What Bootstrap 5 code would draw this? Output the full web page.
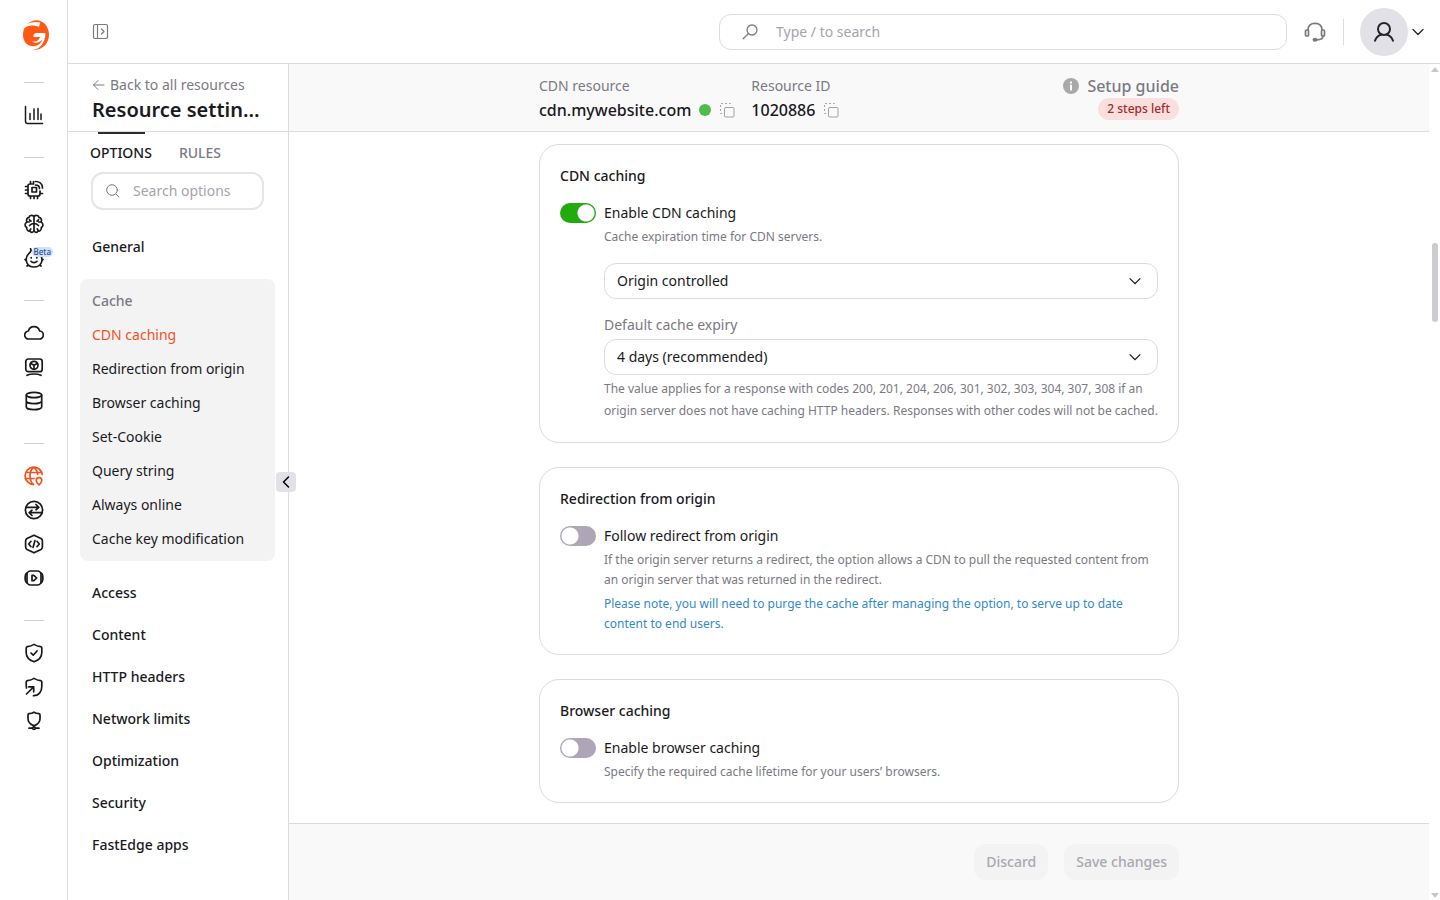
<!DOCTYPE html>
<html lang="en">
<head>
<meta charset="utf-8">
<meta name="viewport" content="width=device-width, initial-scale=1">
<title>Resource settings</title>
<link href="https://cdn.jsdelivr.net/npm/bootstrap@5.3.0/dist/css/bootstrap.min.css" rel="stylesheet">
<style>
  :root { --line: #dcdcdf; --ink: #1a1a1d; --muted: #7b7984; --brand: #f4511e; }
  body { font-family: "Noto Sans", sans-serif; font-size: 14px; line-height: 20px; color: var(--ink); background: #fff; }
  a { color: inherit; text-decoration: none; }
  svg { display: block; fill: none; stroke: currentColor; stroke-linecap: round; stroke-linejoin: round; flex: none; }
  .btn { --bs-btn-font-size: 14px; --bs-btn-line-height: 20px; }

  /* icon rail */
  .rail { width: 68px; border-right: 1px solid var(--line); padding-top: 18px; }
  .rail hr { width: 20px; height: 1px; margin: 25px 0 15px; border: 0; background: #cfcfd3; opacity: 1; }
  .rail-logo { height: 39px; padding-left: 4px; }
  .rail-link { width: 34px; height: 34px; display: grid; place-items: center; }
  .rail-link svg { width: 20px; height: 20px; stroke-width: 1.7; }
  .rail-link.active { color: var(--brand); }
  .beta { left: 15px; top: 6px; background: #cfe0fb; color: #2b5087; font-size: 8px; line-height: 10px; font-weight: 500; border-radius: 5px; padding: 0 2px; }

  /* top bar */
  .topbar { height: 64px; border-bottom: 1px solid var(--line); padding: 0 16px 0 24px; }
  .global-search { width: 568px; height: 36px; border: 1px solid var(--line); border-radius: 12px; padding: 0 22px; gap: 18px; }
  .bare-input { border: 0; outline: 0; background: none; padding: 0; min-width: 0; color: inherit; }
  .bare-input::placeholder { color: #a6a3af; opacity: 1; }
  .avatar { width: 48px; height: 48px; background: #e3e1e8; place-items: center; }
  .tall-rule { width: 1px; height: 26px; background: var(--line); }

  /* settings panel */
  .panel { width: 221px; border-right: 1px solid var(--line); }
  .panel-head { height: 68px; border-bottom: 1px solid var(--line); padding: 11px 24px 0; }
  .panel-head h1 { font-size: 20px; line-height: 28px; font-weight: 600; margin: 1px 0 0; }
  .text-soft { color: var(--muted); }
  .tabs { padding: 11px 22px 0; gap: 27px; }
  .tabs .active::before { content: ""; position: absolute; left: 8px; right: 7px; top: -11px; height: 2px; background: #2c2c2f; }
  .option-search { height: 38px; margin: 9px 24px 0 23px; border: 2px solid #e4e4e9; border-radius: 12px; padding: 0 13px; gap: 13px; }
  .group-link { display: block; padding: 11px 24px; font-weight: 500; }
  .group-open { margin: 11px 13px 11px 12px; padding: 5px 12px; border-radius: 8px; background: #f3f3f3; }
  .group-open > * { display: block; padding: 7px 0; margin: 0; }
  .group-open h2 { font-size: 14px; line-height: 20px; font-weight: 500; color: var(--muted); }
  .group-open .active { color: var(--brand); }
  .collapse-btn { right: -8px; top: 408px; width: 20px; height: 20px; background: #e3e1e8; border: 0; border-radius: 4px; padding: 0; display: grid; place-items: center; z-index: 2; }

  /* main column */
  .column { width: 100%; max-width: 640px; margin: 0 auto; }
  .resource-bar { height: 68px; background: #f9f9f9; border-bottom: 1px solid var(--line); padding-top: 12px; }
  .resource-bar .value { font-size: 16px; line-height: 24px; font-weight: 500; margin-top: 2px; gap: 8px; }
  .status-dot { width: 12px; height: 12px; background: #52bb4e; }
  .steps { background: #fadfdf; color: #a32b2b; font-size: 12px; line-height: 16px; font-weight: 500; padding: 3px 9px; margin-top: 2px; }
  .icon-btn { border: 0; background: none; padding: 0; }
  .copy { color: #a3a2aa; }
  .option-card { border: 1px solid var(--line); border-radius: 20px; padding: 20px; }
  .option-card h2 { font-size: 14px; line-height: 22px; font-weight: 500; margin: 0 0 14px; }
  .form-switch.toggle { min-height: 24px; margin: 0 0 2px; padding: 0; gap: 8px; }
  .form-switch.toggle .form-check-input { width: 36px; height: 20px; margin: 0; border: 0; background-color: #aea6b6; background-image: radial-gradient(circle at center, #fff 8px, transparent 9px); background-size: 20px 20px; flex: none; }
  .form-switch.toggle .form-check-input:checked { background-color: #21ab0e; }
  .details { padding-left: 44px; }
  .hint { font-size: 12px; line-height: 20px; color: var(--muted); margin: 0; }
  .hint.loose { line-height: 22px; margin-top: 3px; }
  .hint.note { color: #3589c9; }
  .form-select { height: 36px; font-size: 14px; line-height: 20px; padding: 7px 36px 7px 12px; border-color: var(--line); border-radius: 12px; color: var(--ink);
    background-image: url("data:image/svg+xml,%3csvg xmlns='http://www.w3.org/2000/svg' viewBox='0 0 12 12'%3e%3cpath fill='none' stroke='%231a1a1d' stroke-width='1.3' d='M.7 3.4 6 8.6l5.300-5.200'/%3e%3c/svg%3e"); background-size: 12px 12px; background-position: right 16px center; }
  .action-bar { height: 77px; background: #f9f9f9; border-top: 1px solid var(--line); padding-top: 20px; }
  .action-bar .btn { height: 36px; padding: 0 12px; border: 0; border-radius: 12px; background: #f3f3f4; color: #aaa7b1; opacity: 1; font-weight: 500; }
  .scroll-track { width: 11px; padding: 3px 0 2px; color: #c8c8cb; }
  .scroll-track svg { fill: currentColor; stroke: none; }
  .scroll-thumb { width: 6px; height: 79px; left: 3px; top: 179px; background: #cdccd1; border-radius: 3px; }
</style>
</head>
<body>
<div class="d-flex vh-100 overflow-hidden">

  <nav class="rail d-flex flex-column align-items-center flex-shrink-0" aria-label="Products">
    <a class="rail-logo" href="#" aria-label="Home">
      <svg width="28" height="34" viewBox="0 0 28 34">
        <path fill="#ff5913" stroke="none" d="M5.500 6C8 3.500 11 2.200 14.500 2.200 21.500 2.200 27 8.700 27 16.800c0 8.700-6.500 15.500-16.300 15.400C17 31 22 26.500 23.200 18.500l.1-3.500H14.500c-2 0-3 1.500-3.200 4h6.700c-1 3-3.200 4.500-5.700 4.500-3 0-4.700-2-4.300-5.500C8.600 12.800 11.500 9.500 17 9l1.300-4.600C13 3.200 8.500 4.200 5.500 6Z"/>
        <path fill="#ff5913" stroke="none" d="M17 8.800C10 6.500 5.500 7.500 2.500 10 .5 14 .8 19 2 22c1.500 4 5 6.200 9 6.200 4.500 0 8-2.700 9.500-6.700-3 3.300-7 4-9.500 2.500-4-2.500-2.500-9 6-15.200Z"/>
      </svg>
    </a>
    <hr>
    <a class="rail-link" href="#" aria-label="Statistics"><svg viewBox="0 0 20 20"><path d="M1.500 1.500v14.700c0 1.400.7 2.300 2.300 2.300h14.700M6 8.500v6M10 4v10.500M14 3.500v11M17 9v5.500" stroke-width="1.500"/></svg></a>
    <hr>
    <a class="rail-link" href="#" aria-label="Edge compute"><svg viewBox="0 0 20 20"><path d="M9 4H6a2 2 0 0 0-2 2v8a2 2 0 0 0 2 2h8a2 2 0 0 0 2-2v-3M8 7.500h4.500V12H8zM6.500 4V1.500M9.500 4V1.500M6.500 16v2.500M10 16v2.500M13.500 16v2.500M4 6.500H1.500M4 10H1.500M4 13.500H1.500M16 13.500h2.500M11.500 5c2.500 0 4 1.500 4 3.500M11.500 1.500c4 0 7 2.500 7 6.500"/></svg></a>
    <a class="rail-link" href="#" aria-label="AI"><svg viewBox="0 0 20 20"><path d="M10 3C9.500.8 5.500.7 5 3.400 2.500 3.800 2 6.500 3 8 .5 9.200.5 12.200 2.700 13.500 2.300 16 4.500 17.500 6 17c1 2.200 4 1.500 4-1zm0 0c.5-2.200 4.500-2.300 5 .4 2.500.4 3 3.100 2 4.600 2.500 1.200 2.500 4.200.3 5.500.4 2.500-1.800 4-3.300 3.500-1 2.200-4 1.500-4-1M5.500 5.500c0 1 .5 1.500 1.500 1.700M14.500 5.500c0 1-.5 1.500-1.500 1.700M10 9.500c-2 0-3 .5-4.500 2M10 9.500c2 0 3 .5 4.500 2M3 8h2M17 8h-2M6 17c-.2-1 .1-1.700.8-2.100M14 17c.2-1-.1-1.700-.8-2.100"/></svg></a>
    <a class="rail-link position-relative" href="#" aria-label="AI assistant, beta"><svg viewBox="0 0 20 20"><path d="M6.500.8C8.200 3 6.500 4 4.500 6 1.500 9 2 12.500 3 15c1.200 2.700 3.600 4 7 4s6-1.500 7.200-4c1-2 1-4 .3-5.800M1 11.500l1 1M19 11.500l-1 1M4 17.300l-1 .7M16 17.300l1 .7M7.200 9.500v.5M12.800 9.500v.5M7 13.300c1.500 1.800 4.500 1.800 6 0"/></svg><span class="beta position-absolute">Beta</span></a>
    <hr>
    <a class="rail-link" href="#" aria-label="Cloud"><svg viewBox="0 0 20 20"><path d="M5 16a4 4 0 0 1-.6-8A5.800 5.800 0 0 1 15.600 8a4 4 0 0 1-.6 8z"/></svg></a>
    <a class="rail-link" href="#" aria-label="Hosting"><svg viewBox="0 0 20 20"><rect x="1.800" y="2" width="16.400" height="12.700" rx="2.500"/><circle cx="10" cy="8.300" r="4"/><path d="M10 8.300V12M10 8.300 6.800 6.500M10 8.300l3.200-1.800M3 18.300c2-.9 4-1.300 7-1.300s5 .4 7 1.300"/></svg></a>
    <a class="rail-link" href="#" aria-label="Storage"><svg viewBox="0 0 20 20"><ellipse cx="10" cy="4" rx="7.700" ry="2.700"/><path d="M2.300 4v12c0 1.500 3.400 2.700 7.700 2.700s7.700-1.200 7.700-2.700V4M2.300 10c0 1.500 3.400 2.700 7.700 2.700s7.700-1.200 7.700-2.700"/></svg></a>
    <hr>
    <a class="rail-link active" href="#" aria-label="CDN"><svg viewBox="0 0 20 20"><path d="M18.400 8.500A8.700 8.700 0 1 0 9.500 18.500M9.500 18.500C7 16.500 6 13 6 10s1-6.500 3.700-8.600C12.300 3.200 13.500 6 13.600 8.500M2 6.500h15.500M1.200 12.500H10"/><path d="M15 19c-1.700-1.600-2.800-2.900-2.800-4.500a2.800 2.800 0 0 1 5.600 0c0 1.600-1.100 2.900-2.800 4.500Z"/></svg></a>
    <a class="rail-link" href="#" aria-label="Load balancing"><svg viewBox="0 0 20 20"><circle cx="10" cy="10" r="8.600"/><path d="M2 7.300h12.500M12 4.500l2.800 2.800-2.800 2.500M18 12.700H5.500M8 10.200l-2.800 2.500L8 15.500"/></svg></a>
    <a class="rail-link" href="#" aria-label="FastEdge"><svg viewBox="0 0 20 20"><path d="M10 1.200 17 4.600q1.400.8 1.400 2.300v6.200q0 1.500-1.400 2.300L10 18.800 3 15.400q-1.400-.8-1.400-2.300V6.900Q1.600 5.400 3 4.600ZM7 7.300 4.700 10 7 12.700M13 7.300l2.300 2.700-2.300 2.700M11 6.500l-2 7"/></svg></a>
    <a class="rail-link" href="#" aria-label="Streaming"><svg viewBox="0 0 20 20"><rect x="3" y="3" width="14" height="14" rx="3.500"/><path d="M3 5C.5 6.500.5 13.500 3 15M17 5c2.500 1.500 2.500 8.500 0 10M8 7.300v5.400h1.800l2.900-2.700-2.900-2.700z"/></svg></a>
    <hr>
    <a class="rail-link" href="#" aria-label="DDoS protection"><svg viewBox="0 0 20 20"><path d="M10 1.400c1.800 1.200 4.300 2 6.500 2.200q1.300.2 1.300 1.500v4.400c0 4.700-3.300 7.800-7.800 9.300-4.500-1.500-7.800-4.600-7.800-9.300V5.100q0-1.300 1.300-1.500C5.700 3.400 8.200 2.600 10 1.400ZM7 10l2.200 2.200L13 8"/></svg></a>
    <a class="rail-link" href="#" aria-label="WAAP"><svg viewBox="0 0 20 20"><path d="M2.500 11C2.100 9 2.200 7 2.200 5.100q0-1.300 1.300-1.500C5.700 3.400 8.200 2.600 10 1.400c1.800 1.200 4.300 2 6.500 2.200q1.300.2 1.300 1.500v4.400c0 5.300-3 9.300-8.300 9.200M2.500 17 9.500 10M4.700 9.800h5v5"/></svg></a>
    <a class="rail-link" href="#" aria-label="DNS"><svg viewBox="0 0 20 20"><path d="M10 1.200c1.500.9 3.200 1.300 5 1.500q1 .2 1 1.200v3.800c0 3.500-2.500 5.700-6 7-3.500-1.300-6-3.500-6-7V3.900q0-1 1-1.200c1.800-.2 3.500-.6 5-1.500ZM10 14.700v1M5 17.200h3M12 17.200h3"/><circle cx="10" cy="17.200" r="1.300"/></svg></a>
  </nav>

  <div class="d-flex flex-column flex-grow-1">
    <header class="topbar d-flex align-items-center flex-shrink-0">
      <button class="icon-btn text-soft" type="button" aria-label="Expand menu"><svg width="17" height="17" viewBox="0 0 17 17" stroke-width="1.200"><rect x="1.500" y="1.500" width="14" height="14" rx="1.500"/><path d="M5.500 1.500v14M9.500 6l2.500 2.500L9.500 11"/></svg></button>
      <label class="global-search d-flex align-items-center ms-auto">
        <svg class="text-soft" width="16" height="16" viewBox="0 0 16 16"><circle cx="10" cy="6" r="5" stroke-width="1.300"/><path stroke-width="1.300" d="m6.500 9.500-5.300 5.300"/></svg>
        <input class="bare-input flex-grow-1" type="text" placeholder="Type / to search" aria-label="Search">
      </label>
      <button class="icon-btn text-soft ms-3" type="button" aria-label="Support"><svg width="24" height="24" viewBox="0 0 24 24" stroke-width="1.700"><rect x="2.500" y="10" width="3" height="6" rx="1"/><rect x="18.500" y="10" width="3" height="6" rx="1"/><path d="M5 10c0-4 2.500-6.700 7-6.700s7 2.700 7 6.700M20 16c0 3-2 3.800-6 3.800"/><ellipse cx="12" cy="19.800" rx="1.700" ry="1.200" fill="currentColor"/></svg></button>
      <span class="tall-rule ms-3 me-3"></span>
      <button class="icon-btn d-flex align-items-center gap-1 text-dark" type="button" aria-label="Account">
        <span class="avatar rounded-circle d-grid"><svg width="22" height="22" viewBox="0 0 22 22" stroke-width="2"><circle cx="11" cy="8" r="6"/><path d="M2 19.800c1.200-3.700 3.800-5.600 6.500-6.300M20 19.800c-1.200-3.700-3.800-5.600-6.500-6.300"/></svg></span>
        <svg width="12" height="12" viewBox="0 0 12 12" stroke-width="1.300"><path d="M1 3.500l5 5 5-5"/></svg>
      </button>
    </header>

    <div class="d-flex flex-grow-1 overflow-hidden">
      <aside class="panel position-relative flex-shrink-0">
        <div class="panel-head">
          <a class="d-flex align-items-center text-soft" href="#"><svg class="me-1" width="14" height="12" viewBox="0 0 14 12"><path d="M12 6H1.500M6 1.500 1.500 6 6 10.500"/></svg>Back to all resources</a>
          <h1 class="text-truncate">Resource settings</h1>
        </div>
        <div class="tabs d-flex">
          <a class="active position-relative fw-medium" href="#">OPTIONS</a>
          <a class="text-soft fw-medium" href="#">RULES</a>
        </div>
        <label class="option-search d-flex align-items-center">
          <svg class="text-soft" width="14" height="14" viewBox="0 0 14 14"><circle cx="6" cy="6" r="5.300"/><path d="m10.200 10.200 2.800 2.800"/></svg>
          <input class="bare-input w-100" type="text" placeholder="Search options" aria-label="Search options">
        </label>
        <nav class="pt-3" aria-label="Options">
          <a class="group-link" href="#">General</a>
          <div class="group-open">
            <h2>Cache</h2>
            <a class="active" href="#">CDN caching</a>
            <a href="#">Redirection from origin</a>
            <a href="#">Browser caching</a>
            <a href="#">Set-Cookie</a>
            <a href="#">Query string</a>
            <a href="#">Always online</a>
            <a href="#">Cache key modification</a>
          </div>
          <a class="group-link" href="#">Access</a>
          <a class="group-link" href="#">Content</a>
          <a class="group-link" href="#">HTTP headers</a>
          <a class="group-link" href="#">Network limits</a>
          <a class="group-link" href="#">Optimization</a>
          <a class="group-link" href="#">Security</a>
          <a class="group-link" href="#">FastEdge apps</a>
        </nav>
        <button class="collapse-btn position-absolute" type="button" aria-label="Collapse panel"><svg width="8" height="12" viewBox="0 0 8 12" stroke-width="1.500"><path d="M6.500 1 1.500 6l5 5"/></svg></button>
      </aside>

      <main class="d-flex flex-column flex-grow-1">
        <div class="resource-bar flex-shrink-0">
          <div class="column d-flex">
            <div class="me-3">
              <div class="text-soft">CDN resource</div>
              <div class="value d-flex align-items-center">cdn.mywebsite.com <span class="status-dot rounded-circle"></span>
                <button class="icon-btn copy" type="button" aria-label="Copy CDN resource"><svg width="16" height="16" viewBox="0 0 16 16"><rect x="5.500" y="5.500" width="9.500" height="9.500" rx="1"/><path stroke-dasharray="2 2" stroke-linecap="butt" d="M3 11.500H1.500v-10h10V3"/></svg></button></div>
            </div>
            <div>
              <div class="text-soft">Resource ID</div>
              <div class="value d-flex align-items-center">1020886
                <button class="icon-btn copy" type="button" aria-label="Copy resource ID"><svg width="16" height="16" viewBox="0 0 16 16"><rect x="5.500" y="5.500" width="9.500" height="9.500" rx="1"/><path stroke-dasharray="2 2" stroke-linecap="butt" d="M3 11.500H1.500v-10h10V3"/></svg></button></div>
            </div>
            <div class="ms-auto d-flex flex-column align-items-end">
              <a class="d-flex align-items-center gap-2 fs-6 fw-medium text-soft" href="#"><svg width="16" height="16" viewBox="0 0 16 16"><circle cx="8" cy="8" r="8" fill="#a9a9ab" stroke="none"/><path fill="#fff" stroke="none" d="M7 3.500h2v2H7zM7 6.700h2v5.800H7z"/></svg>Setup guide</a>
              <span class="steps rounded-pill">2 steps left</span>
            </div>
          </div>
        </div>

        <div class="flex-grow-1 overflow-hidden">
          <div class="column d-flex flex-column gap-4 pt-2 mt-1">
            <section class="option-card">
              <h2>CDN caching</h2>
              <div class="form-check form-switch toggle d-flex align-items-center"><input class="form-check-input" type="checkbox" role="switch" id="cdnCaching" checked><label for="cdnCaching">Enable CDN caching</label></div>
              <div class="details">
                <p class="hint">Cache expiration time for CDN servers.</p>
                <select class="form-select mt-3" aria-label="Cache expiration time"><option>Origin controlled</option></select>
                <label class="d-block text-soft mt-3 mb-1" for="expiry">Default cache expiry</label>
                <select class="form-select" id="expiry"><option>4 days (recommended)</option></select>
                <p class="hint loose">The value applies for a response with codes 200, 201, 204, 206, 301, 302, 303, 304, 307, 308 if an origin server does not have caching HTTP headers. Responses with other codes will not be cached.</p>
              </div>
            </section>
            <section class="option-card">
              <h2>Redirection from origin</h2>
              <div class="form-check form-switch toggle d-flex align-items-center"><input class="form-check-input" type="checkbox" role="switch" id="followRedirect"><label for="followRedirect">Follow redirect from origin</label></div>
              <div class="details">
                <p class="hint">If the origin server returns a redirect, the option allows a CDN to pull the requested content from an origin server that was returned in the redirect.</p>
                <p class="hint note mt-1">Please note, you will need to purge the cache after managing the option, to serve up to date content to end users.</p>
              </div>
            </section>
            <section class="option-card">
              <h2>Browser caching</h2>
              <div class="form-check form-switch toggle d-flex align-items-center"><input class="form-check-input" type="checkbox" role="switch" id="browserCaching"><label for="browserCaching">Enable browser caching</label></div>
              <div class="details">
                <p class="hint">Specify the required cache lifetime for your users’ browsers.</p>
              </div>
            </section>
          </div>
        </div>

        <footer class="action-bar flex-shrink-0">
          <div class="column d-flex justify-content-end gap-3">
            <button class="btn" type="button" disabled>Discard</button>
            <button class="btn" type="button" disabled>Save changes</button>
          </div>
        </footer>
      </main>

      <div class="scroll-track position-relative d-flex flex-column align-items-center justify-content-between flex-shrink-0" aria-hidden="true">
        <svg width="8" height="5" viewBox="0 0 8 5"><path d="M4 0l4 5H0z"/></svg>
        <span class="scroll-thumb position-absolute"></span>
        <svg width="8" height="5" viewBox="0 0 8 5"><path d="M4 5 0 0h8z"/></svg>
      </div>
    </div>
  </div>
</div>
<script src="https://cdn.jsdelivr.net/npm/bootstrap@5.3.0/dist/js/bootstrap.bundle.min.js"></script>
</body>
</html>
